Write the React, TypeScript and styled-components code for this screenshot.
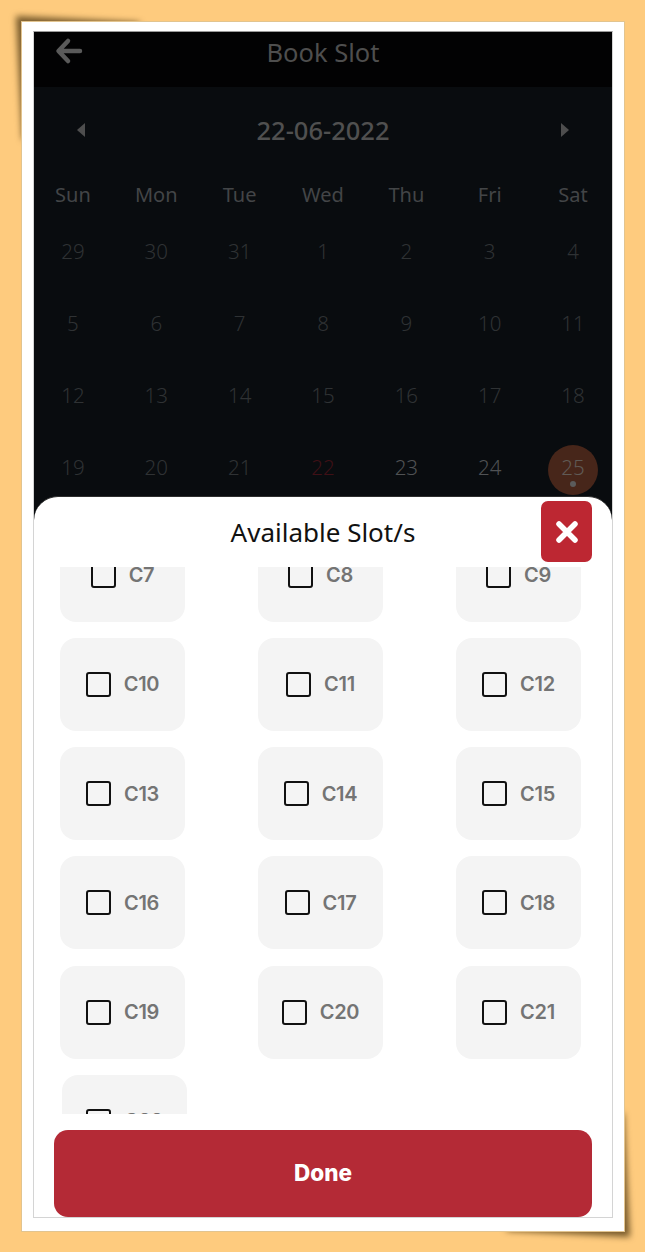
import React from 'react'
import styled, { createGlobalStyle } from 'styled-components'

const GlobalStyle = createGlobalStyle`
  html, body {
    margin: 0;
    padding: 0;
    background: #fecb7e;
  }
  * {
    box-sizing: border-box;
  }
`

const Page = styled.div`
  position: relative;
  z-index: 0;
  width: 645px;
  height: 1252px;
  padding: 21px;
  overflow: hidden;
  font-family: 'Noto Sans', sans-serif;
`

const Frame = styled.div`
  position: relative;
  width: 604px;
  height: 1211px;
  padding: 9px 11px 11px 11px;
  background: #fff;
  border: 1px solid #e2c48f;
`

const CornerShadow = styled.div<{ $end?: boolean }>`
  position: absolute;
  z-index: -1;
  width: 125px;
  height: 125px;
  filter: blur(3px);
  ${(p) => (p.$end ? 'right: -6px; bottom: -6px;' : 'left: -6px; top: -6px;')}

  &::before {
    content: '';
    display: block;
    width: 100%;
    height: 100%;
    background: rgba(86, 62, 24, 0.8);
    clip-path: ${(p) =>
      p.$end
        ? 'polygon(100% 100%, 0 95%, 95% 0)'
        : 'polygon(0 0, 100% 5%, 5% 100%)'};
  }
`

const Phone = styled.div`
  display: flex;
  flex-direction: column;
  width: 580px;
  height: 1187px;
  border: 1px solid #d4d4d4;
  border-top-color: #9a9a9a;
  overflow: hidden;
  background: #090c0f;
`

const Header = styled.header`
  position: relative;
  flex: none;
  height: 55px;
  background: #020203;
  display: flex;
  justify-content: center;
  align-items: flex-start;
  padding-top: 2px;
`

const HeaderTitle = styled.h1`
  margin: 0;
  font-size: 25.5px;
  line-height: 36px;
  font-weight: 400;
  color: #4e4e4e;
`

const BackButton = styled.div`
  position: absolute;
  left: 20px;
  top: 4px;
  width: 30px;
  height: 30px;
`

const Calendar = styled.section`
  flex: none;
  height: 409px;
  overflow: hidden;
`

const MonthBar = styled.div`
  display: flex;
  align-items: center;
  justify-content: space-between;
  height: 36px;
  margin-top: 25px;
  padding: 0 43px;
`

const MonthLabel = styled.div`
  font-size: 25.5px;
  font-weight: 500;
  color: #505050;
`

const Arrow = styled.div<{ $right?: boolean }>`
  width: 0;
  height: 0;
  border-top: 7.5px solid transparent;
  border-bottom: 7.5px solid transparent;
  border-left: ${(p) => (p.$right ? '8px solid #4e4e4e' : 'none')};
  border-right: ${(p) => (p.$right ? 'none' : '8px solid #4e4e4e')};
`

const DayGrid = styled.div`
  display: grid;
  grid-template-columns: repeat(7, 1fr);
  column-gap: 5.5px;
`

const WeekDay = styled.div`
  height: 40px;
  margin-top: 27px;
  text-align: center;
  font-size: 20px;
  line-height: 40px;
  color: #434547;
`

const DayCell = styled.div`
  position: relative;
  display: flex;
  justify-content: center;
  align-items: center;
  height: 72px;
`

const DayNumber = styled.span<{ $tone: string }>`
  position: relative;
  font-size: 20.5px;
  font-weight: 300;
  color: ${(p) => p.$tone};
`

const TodayCircle = styled.div`
  position: absolute;
  left: 50%;
  top: 14px;
  width: 50px;
  height: 50px;
  margin-left: -25px;
  border-radius: 50%;
  background: #47261a;
`

const TodayDot = styled.div`
  position: absolute;
  left: 50%;
  top: 50px;
  width: 6px;
  height: 6px;
  margin-left: -3px;
  border-radius: 50%;
  background: #5b5b5b;
`

const Sheet = styled.section`
  position: relative;
  flex: 1;
  min-height: 0;
  display: flex;
  flex-direction: column;
  background: #fff;
  border-radius: 24px 24px 0 0;
  border-top: 1px solid #2e2e2e;
`

const SheetHeader = styled.div`
  flex: none;
  height: 70px;
  padding-bottom: 1px;
  display: flex;
  justify-content: center;
  align-items: center;
`

const SheetTitle = styled.h2`
  margin: 0;
  font-size: 26px;
  font-weight: 400;
  color: #111;
`

const CloseButton = styled.button`
  position: absolute;
  top: 4px;
  right: 20px;
  width: 51px;
  height: 61px;
  display: flex;
  align-items: center;
  justify-content: center;
  padding: 0;
  border: none;
  border-radius: 7px;
  background: #bd2732;
`

const SlotList = styled.div`
  flex: 1;
  min-height: 0;
  overflow: hidden;
`

const SlotGrid = styled.div`
  display: grid;
  grid-template-columns: repeat(3, 125px);
  grid-auto-rows: 93px;
  column-gap: 73px;
  row-gap: 16.3px;
  margin-top: -38.5px;
  padding-left: 26px;
`

const SlotTile = styled.div<{ $last?: boolean }>`
  display: flex;
  align-items: center;
  justify-content: center;
  gap: 13px;
  background: #f4f4f4;
  border-radius: 16px;
  ${(p) => (p.$last ? 'margin: 0 -2px 0 2px;' : '')}
`

const SlotBox = styled.span`
  flex: none;
  width: 25px;
  height: 25px;
  border: 2.5px solid #111;
  border-radius: 3px;
`

const SlotLabel = styled.span`
  font-family: Inter, sans-serif;
  font-size: 20px;
  font-weight: 600;
  letter-spacing: -0.3px;
  color: #747474;
`

const Footer = styled.div`
  flex: none;
  padding: 16px 20px 0 20px;
`

const DoneButton = styled.button`
  display: block;
  width: 100%;
  height: 87px;
  padding: 0 0 3px;
  border: none;
  border-radius: 14px;
  background: #b42a36;
  color: #fff;
  font-family: Inter, sans-serif;
  font-size: 22.5px;
  font-weight: 800;
`

const weekDays = ['Sun', 'Mon', 'Tue', 'Wed', 'Thu', 'Fri', 'Sat']
const days = [29, 30, 31, 1, 2, 3, 4, 5, 6, 7, 8, 9, 10, 11, 12, 13, 14, 15, 16, 17, 18, 19, 20, 21, 22, 23, 24, 25]
const slots = ['C7', 'C8', 'C9', 'C10', 'C11', 'C12', 'C13', 'C14', 'C15', 'C16', 'C17', 'C18', 'C19', 'C20', 'C21', 'C22']

function dayTone(index: number) {
  if (index === 27) return '#605a55'
  if (index >= 25) return '#505254'
  if (index === 24) return '#3f1016'
  return '#2f3234'
}

export default function App() {
  return (
    <>
      <GlobalStyle />
      <Page>
        <Frame>
          <CornerShadow />
          <CornerShadow $end />
          <Phone>
            <Header>
              <BackButton>
                <svg width="30" height="30" viewBox="0 0 30 30" fill="none" stroke="#5a5a5a" strokeWidth="4.5" strokeLinecap="round" strokeLinejoin="round">
                  <path d="M26 15H5M14 5L4.5 15L14 25" />
                </svg>
              </BackButton>
              <HeaderTitle>Book Slot</HeaderTitle>
            </Header>
            <Calendar>
              <MonthBar>
                <Arrow />
                <MonthLabel>22-06-2022</MonthLabel>
                <Arrow $right />
              </MonthBar>
              <DayGrid>
                {weekDays.map((d) => (
                  <WeekDay key={d}>{d}</WeekDay>
                ))}
                {days.map((d, i) => (
                  <DayCell key={i}>
                    {i === 27 && <TodayCircle />}
                    <DayNumber $tone={dayTone(i)}>{d}</DayNumber>
                    {i === 27 && <TodayDot />}
                  </DayCell>
                ))}
              </DayGrid>
            </Calendar>
            <Sheet>
              <SheetHeader>
                <SheetTitle>Available Slot/s</SheetTitle>
              </SheetHeader>
              <CloseButton aria-label="Close">
                <svg width="24" height="24" viewBox="0 0 24 24" fill="none" stroke="#fff" strokeWidth="5.5" strokeLinecap="round">
                  <path d="M4 4L20 20M20 4L4 20" />
                </svg>
              </CloseButton>
              <SlotList>
                <SlotGrid>
                  {slots.map((s) => (
                    <SlotTile key={s} $last={s === 'C22'}>
                      <SlotBox />
                      <SlotLabel>{s}</SlotLabel>
                    </SlotTile>
                  ))}
                </SlotGrid>
              </SlotList>
              <Footer>
                <DoneButton>Done</DoneButton>
              </Footer>
            </Sheet>
          </Phone>
        </Frame>
      </Page>
    </>
  )
}
